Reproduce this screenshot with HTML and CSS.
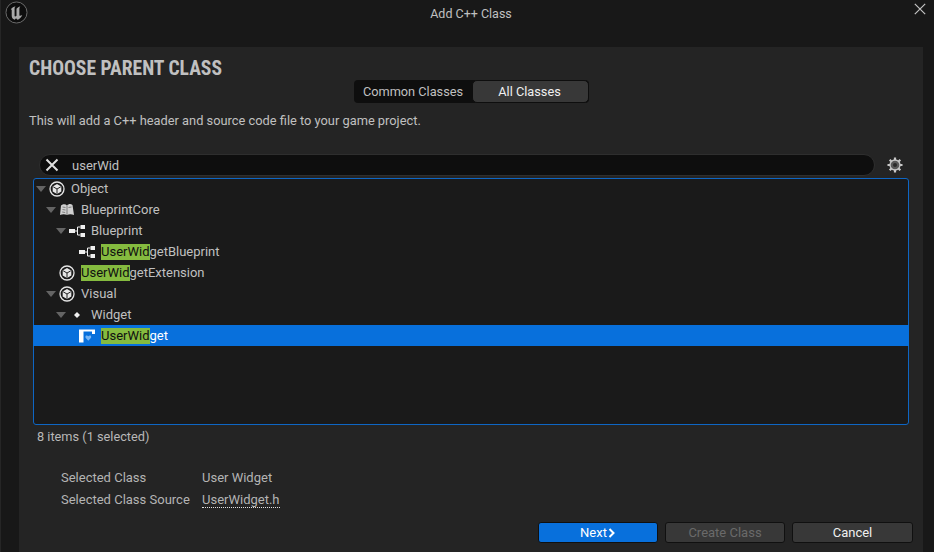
FILE: index.html
```html
<!DOCTYPE html>
<html lang="en">
<head>
<meta charset="utf-8">
<title>Add C++ Class</title>
<link rel="stylesheet" href="styles.css">
</head>
<body>
<div class="window">
  <header class="titlebar">
    <svg class="logo" viewBox="0 0 24 24" width="23" height="23"><circle cx="12" cy="12" r="11" fill="#0d0d0d" stroke="#6e6e6e" stroke-width="1"/><path d="M6 8.500C7.500 7 9 6 11 5.500C10 6.800 10 7.500 10 9V15.500C10 16.500 11 16.500 12 15.500V8C13 7 14.500 6 16 5.500C15.200 6.800 15 7.500 15 9V15C15.500 15.500 16.500 15.500 18 14.500C17 17 15 19 13 19.500L11.500 18L10 19.500C8 19 7 17.500 7 15.500V9.500C7 9 6.500 8.700 6 8.500Z" fill="#a8a8a8"/></svg>
    <span class="window-title">Add C++ Class</span>
    <svg class="close" viewBox="0 0 12 12" width="12" height="12"><path d="M.8.800l10.400 10.400M11.200.800L.8 11.200" stroke="#c4c4c4" stroke-width="1.200" fill="none"/></svg>
  </header>
  <main class="panel">
    <h1 class="heading">CHOOSE PARENT CLASS</h1>
    <div class="tabs-row">
      <div class="tabs">
        <span class="tab">Common Classes</span>
        <span class="tab tab-active">All Classes</span>
      </div>
    </div>
    <p class="intro">This will add a C++ header and source code file to your game project.</p>
    <div class="search-row">
      <div class="search">
        <svg class="search-x" viewBox="0 0 14 14" width="14" height="14"><path d="M1.500 1.500l11 11M12.500 1.500l-11 11" stroke="#e0e0e0" stroke-width="2" fill="none"/></svg>
        <span class="search-text">userWid</span>
      </div>
      <svg class="gear" viewBox="0 0 16 16" width="16" height="16"><g stroke="#c8c8c8" stroke-width="2.200"><path d="M8 .5v15M.5 8h15M2.700 2.700l10.600 10.600M13.300 2.700L2.700 13.300"/></g><circle cx="8" cy="8" r="5" fill="#5a5a5a" stroke="#c8c8c8" stroke-width="1.300"/><circle cx="8" cy="8" r="2" fill="#2a2a2a"/></svg>
    </div>
    <div class="tree">
      <div class="row d0">
        <i class="arrow"></i>
        <svg class="ico" viewBox="0 0 16 16" width="16" height="16"><use href="#cube"/></svg>
        <span class="label">Object</span>
      </div>
      <div class="row d1">
        <i class="arrow"></i>
        <svg class="ico" viewBox="0 0 16 16" width="16" height="16"><path d="M1 13l1-9.500C4.500 1.500 6.500 2 8 3.500c1.500-1.500 3.500-2 5.500-.5L15 13c-2.500-1-5-1-7 0-2-1-4.500-1-7 0z" fill="#d0d0d0"/><path d="M8 3.500V13M3.500 5l3 .5M3.500 7.500l3 .5M3.200 10l3 .5M12.500 5l-3 .5" stroke="#6a6a6a" stroke-width=".8"/></svg>
        <span class="label">BlueprintCore</span>
      </div>
      <div class="row d2">
        <i class="arrow"></i>
        <svg class="ico" viewBox="0 0 16 16" width="16" height="16"><use href="#tree"/></svg>
        <span class="label">Blueprint</span>
      </div>
      <div class="row d3">
        <i class="arrow none"></i>
        <svg class="ico" viewBox="0 0 16 16" width="16" height="16"><use href="#tree"/></svg>
        <span class="label"><mark>UserWid</mark>getBlueprint</span>
      </div>
      <div class="row d1">
        <i class="arrow none"></i>
        <svg class="ico" viewBox="0 0 16 16" width="16" height="16"><use href="#cube"/></svg>
        <span class="label"><mark>UserWid</mark>getExtension</span>
      </div>
      <div class="row d1">
        <i class="arrow"></i>
        <svg class="ico" viewBox="0 0 16 16" width="16" height="16"><use href="#cube"/></svg>
        <span class="label">Visual</span>
      </div>
      <div class="row d2">
        <i class="arrow"></i>
        <svg class="ico" viewBox="0 0 16 16" width="16" height="16"><path d="M8 5l3 3-3 3-3-3z" fill="#f0f0f0"/></svg>
        <span class="label">Widget</span>
      </div>
      <div class="row d3 selected">
        <i class="arrow none"></i>
        <svg class="ico" viewBox="0 0 16 16" width="16" height="16"><path d="M0 1.500h16v2H0zM0 1.500h4.500v13H0zM13 1.500h3v4.500h-3z" fill="#fff"/><path d="M6.500 8c1-.8 2-.5 2.800.2.800-.7 1.800-1 2.800-.2v1.700l-2.800 3-2.800-3z" fill="#78b6f5"/></svg>
        <span class="label"><mark>UserWid</mark>get</span>
      </div>
    </div>
    <div class="count">8 items (1 selected)</div>
    <dl class="details">
      <dt>Selected Class</dt><dd>User Widget</dd>
      <dt>Selected Class Source</dt><dd><span class="link">UserWidget.h</span></dd>
    </dl>
    <div class="actions">
      <button class="btn btn-primary" type="button">Next<svg class="chev" viewBox="0 0 8 10" width="8" height="10"><path d="M1.500 1L5.500 5l-4 4" stroke="#fff" stroke-width="2" fill="none"/></svg></button>
      <button class="btn btn-disabled" type="button">Create Class</button>
      <button class="btn btn-last" type="button">Cancel</button>
    </div>
  </main>
</div>
<svg class="defs" width="0" height="0">
  <symbol id="cube" viewBox="0 0 16 16"><circle cx="8" cy="8" r="7" fill="none" stroke="#e6e6e6" stroke-width="1.300"/><path d="M8 3l4.300 2.400v5.200L8 13l-4.300-2.400V5.400z" fill="#e6e6e6"/><path d="M4.200 5.800L8 8l3.800-2.200M8 8v4.800" stroke="#222" stroke-width="1" fill="none"/></symbol>
  <symbol id="tree" viewBox="0 0 16 16"><path d="M0 6h6v4H0zM11.500 2h4.500v4h-4.500zM11.500 10h4.500v4h-4.500z" fill="#f0f0f0"/><path d="M6 8h2.500M11.500 4H8.500v8h3" stroke="#f0f0f0" stroke-width="1" fill="none"/></symbol>
</svg>
</body>
</html>
```

FILE: styles.css
```css
* { box-sizing: border-box; }
html, body { margin: 0; height: 100%; }
body { background: #181818; font-family: Roboto, "Liberation Sans", sans-serif; font-size: 13px; color: #c0c0c0; overflow: hidden; }
.window { width: 934px; height: 552px; display: flex; flex-direction: column; position: relative; box-shadow: inset 1px 0 0 #262626; }
.titlebar { height: 47px; flex: none; display: flex; justify-content: center; padding: 7px 0 0 8px; line-height: 14px; font-size: 12.500px; color: #c0c0c0; }
.logo { position: absolute; left: 5px; top: 1px; }
.close { position: absolute; left: 914px; top: 3px; }
.panel { flex: 1; margin: 0 11px 0 19px; background: #242424; padding: 0 10px; display: flex; flex-direction: column; }
.heading { margin: 10px 0 0; font-family: "Liberation Sans Narrow", "Roboto Condensed", Roboto, sans-serif; font-weight: 700; font-size: 19.600px; line-height: 23px; color: #c0c0c0; }
.tabs-row { display: flex; padding-left: 325px; }
.tabs { display: flex; width: 235px; height: 23px; background: #0e0e0e; border-radius: 4px; line-height: 23px; }
.tab { width: 118px; text-align: center; color: #c0c0c0; font-size: 12.750px; }
.tab-active { width: 117px; padding-right: 2px; background: #383838; color: #f0f0f0; border: 1px solid #0e0e0e; border-radius: 5px; line-height: 21px; }
.intro { margin: 0; padding-top: 9px; line-height: 17px; color: #c0c0c0; font-size: 12.830px; }
.search-row { margin: 24px 0 0 10px; display: flex; align-items: center; gap: 12px; height: 24px; }
.search { width: 836px; height: 22px; background: #0e0e0e; border: 1px solid #2e2e2e; border-radius: 11px; display: flex; align-items: center; padding-left: 5px; }
.search-x { flex: none; }
.search-text { margin-left: 13px; color: #c0c0c0; }
.tree { margin: 1px 0 0 4px; width: 876px; height: 247px; border: 1px solid #0e66c4; border-radius: 3px; background: #1a1a1a; }
.row { height: 21px; margin: 0 -1px; display: flex; align-items: center; }
.row:first-child { margin-top: -1px; }
.d0 { padding-left: 3px; }
.d1 { padding-left: 13px; }
.d2 { padding-left: 23px; }
.d3 { padding-left: 33px; }
.arrow { flex: none; width: 13px; height: 6px; }
.arrow::before { content: ""; display: block; width: 0; height: 0; border-left: 5.500px solid transparent; border-right: 5.500px solid transparent; border-top: 6px solid #646464; }
.arrow.none::before { display: none; }
.ico { flex: none; }
.label { margin-left: 6px; color: #c0c0c0; line-height: 15px; }
mark { background: #85bb3f; color: #101010; display: inline-block; line-height: 16px; padding-right: 1px; margin-right: -1px; }
.selected { background: #0870dc; }
.selected .label { color: #fff; }
.count { margin-top: 3px; padding-left: 8px; line-height: 17px; color: #b8b8b8; font-size: 12.750px; }
.details { margin: 25px 0 0 32px; display: grid; grid-template-columns: 141px 1fr; row-gap: 6px; line-height: 16px; color: #b4b4b4; font-size: 13px; }
.details dt, .details dd { margin: 0; }
.link { border-bottom: 1px dotted #e0e0e0; display: inline-block; line-height: 15px; }
.actions { margin-top: 14px; padding-left: 509px; display: flex; gap: 7px; }
.btn { width: 120px; height: 21px; padding: 0; border: 1px solid #101010; border-radius: 3px; background: #383838; color: #f0f0f0; font: 13px/19px Roboto, sans-serif; }
.btn-primary { background: #0870dc; color: #fff; }
.btn-disabled { color: #6a6a6a; }
.btn-last { width: 121px; }
.chev { margin-left: 1px; vertical-align: -1px; }
.defs { position: absolute; }
```
